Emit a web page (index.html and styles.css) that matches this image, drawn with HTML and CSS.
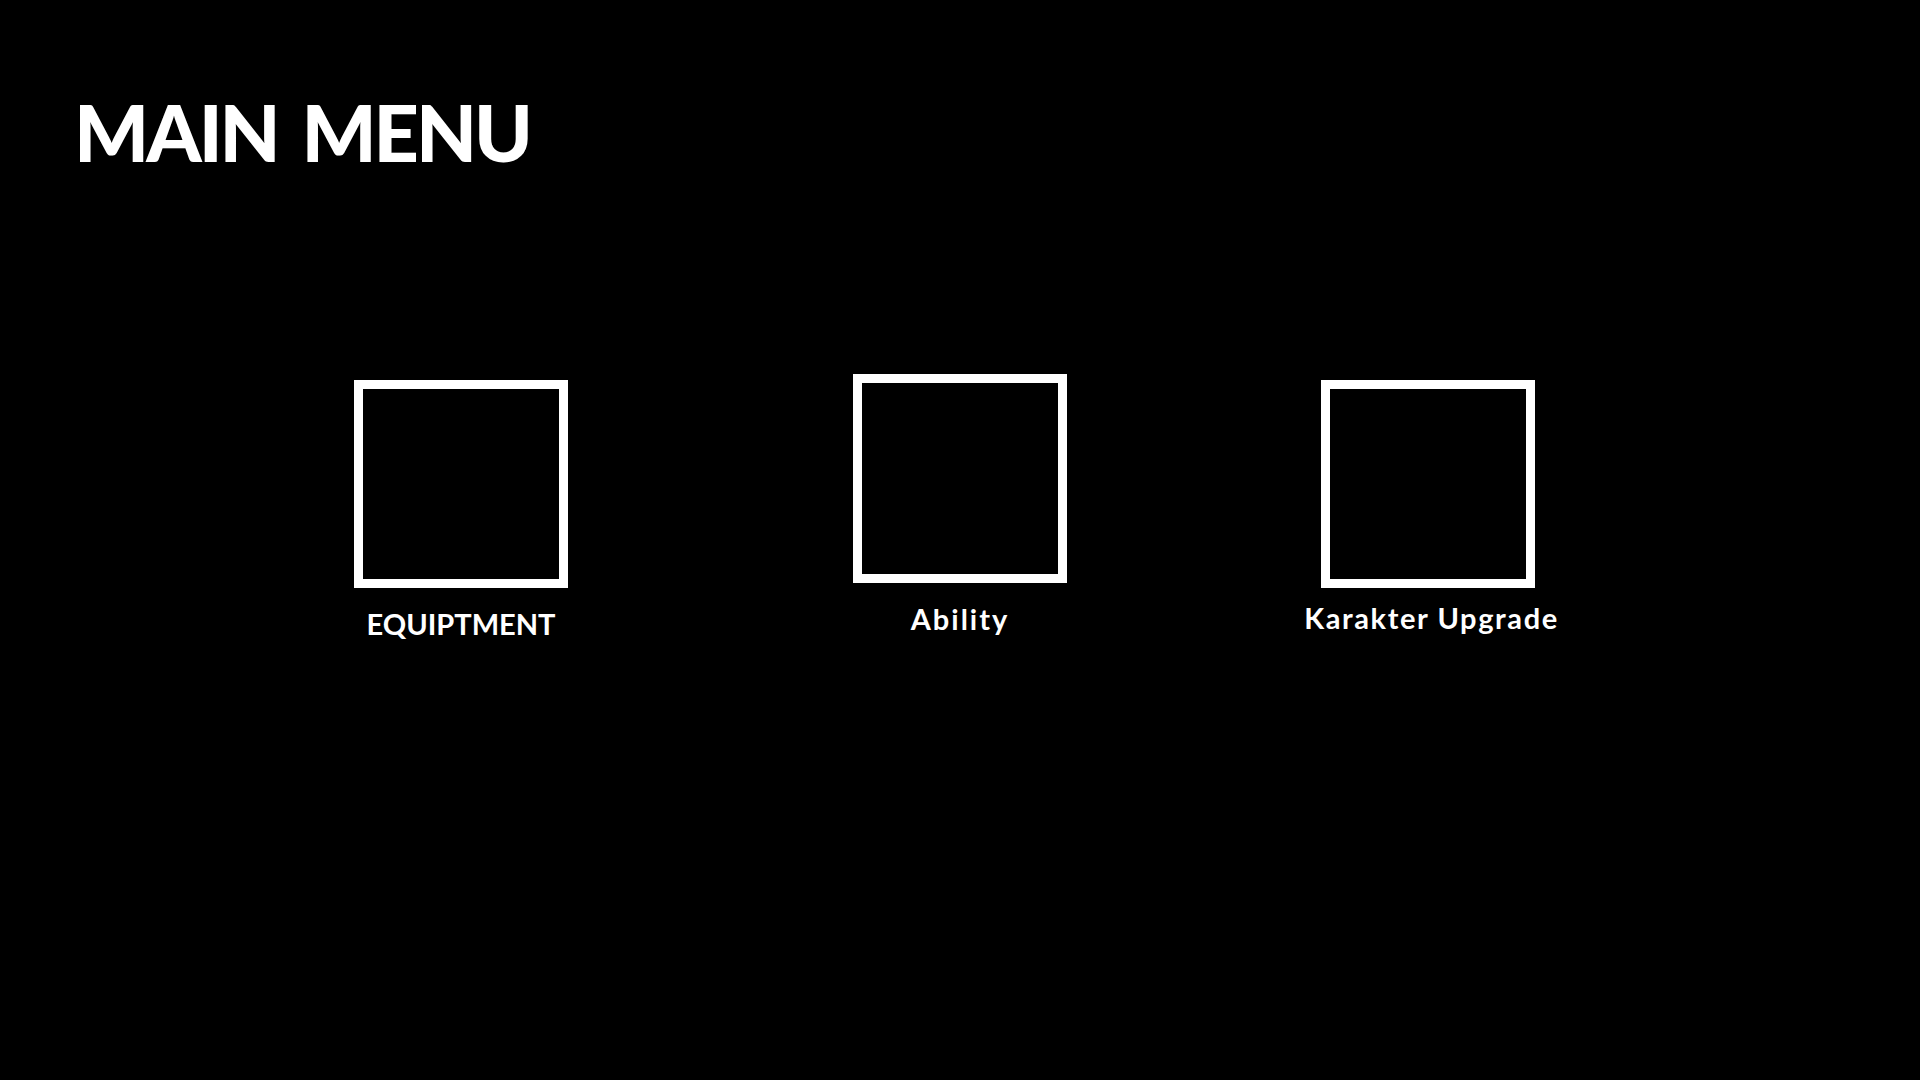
FILE: index.html
```html
<!DOCTYPE html>
<html>
<head>
  <link rel="stylesheet" href="styles.css">
</head>
<body>
  <div class="screen">
    <div class="header">
      <h1>MAIN MENU</h1>
    </div>
    <div class="menu">
      <div class="menu-item item-equip">
        <div class="slot"></div>
        <div class="label">EQUIPTMENT</div>
      </div>
      <div class="menu-item item-ability">
        <div class="slot"></div>
        <div class="label">Ability</div>
      </div>
      <div class="menu-item item-upgrade">
        <div class="slot"></div>
        <div class="label">Karakter Upgrade</div>
      </div>
    </div>
  </div>
</body>
</html>
```

FILE: styles.css
```css
html, body {
  margin: 0;
  padding: 0;
  background-color: #000;
}

body {
  font-family: Lato, "Open Sans", sans-serif;
  color: #fff;
}

.screen {
  width: 1920px;
  height: 1080px;
  overflow: hidden;
}

.header {
  padding: 92px 0 0 74px;
}

.header h1 {
  margin: 0;
  font-size: 79px;
  line-height: 1;
  font-weight: 900;
  letter-spacing: -3px;
  word-spacing: 8px;
}

.menu {
  display: flex;
  align-items: flex-start;
  margin-top: 209px;
  padding-left: 354px;
}

.menu-item {
  width: 214px;
  display: flex;
  flex-direction: column;
  align-items: center;
}

.item-ability {
  margin-left: 285px;
  margin-top: -6px;
}

.item-upgrade {
  margin-left: 254px;
}

.slot {
  box-sizing: border-box;
  width: 214px;
  height: 208px;
  border: 9px solid #fff;
}

.item-ability .slot {
  height: 209px;
}

.label {
  margin-top: 19px;
  font-size: 29px;
  line-height: 1.2;
  font-weight: 700;
  white-space: nowrap;
}

.item-ability .label {
  margin-top: 19px;
  letter-spacing: 2px;
}

.item-upgrade .label {
  margin-top: 13px;
  margin-left: 7px;
  letter-spacing: 1.6px;
}
```
